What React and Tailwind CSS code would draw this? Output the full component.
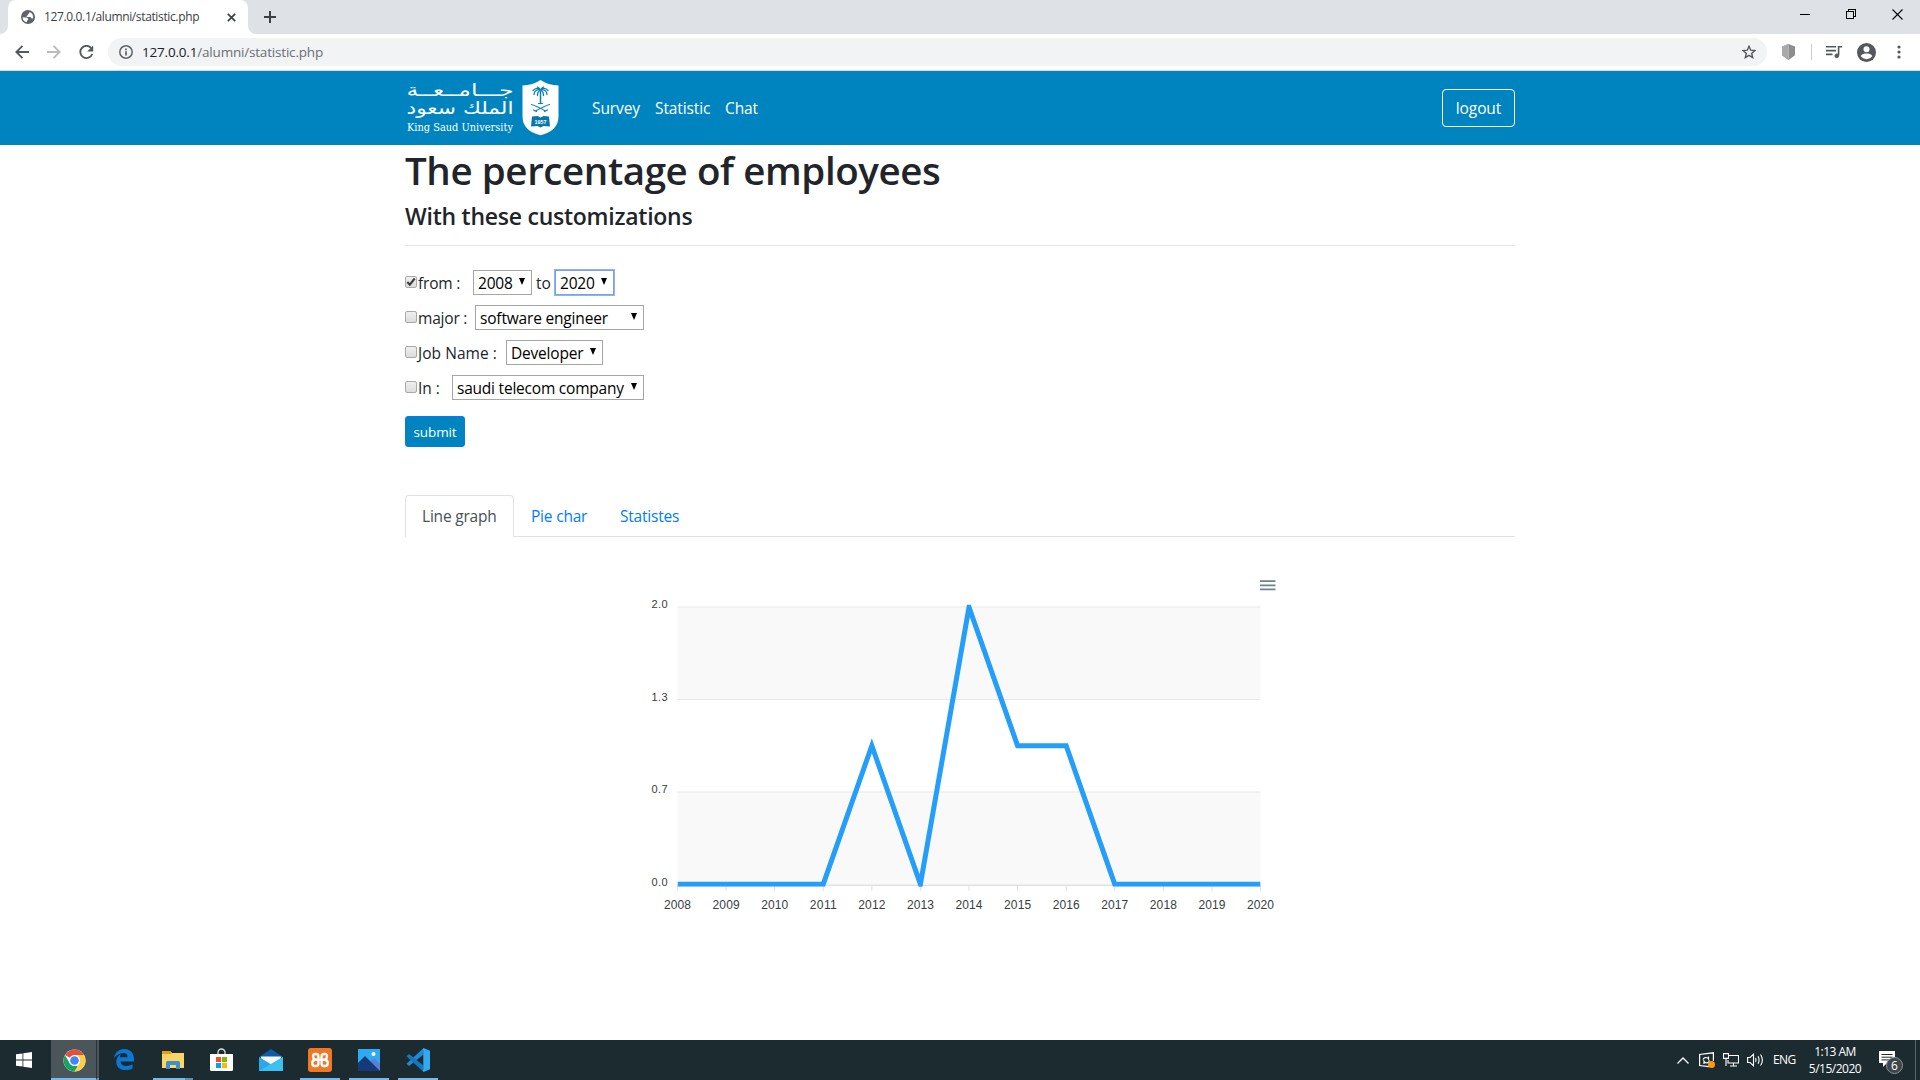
import React from "react";

const YEARS = [2008, 2009, 2010, 2011, 2012, 2013, 2014, 2015, 2016, 2017, 2018, 2019, 2020];
const VALUES = [0, 0, 0, 0, 1, 0, 2, 1, 1, 0, 0, 0, 0];
const Y_LABELS = ["2.0", "1.3", "0.7", "0.0"];

function TabStrip() {
  return (
    <div className="flex h-[34px] items-stretch bg-[#dee1e6]">
      <div className="flex w-2 items-end bg-white">
        <div className="h-full w-2 rounded-br-lg bg-[#dee1e6]" />
      </div>
      <div className="flex w-[240px] items-center rounded-t-lg bg-white pl-[13px] pr-[10px]">
        <svg width="14" height="14" viewBox="0 0 14 14" className="shrink-0">
          <circle cx="7" cy="7" r="7" fill="#5f6368" />
          <path d="M1.6 7.2L5 7.6c1.6.3 2.4 1.2 2.2 2.3L6 10.4v1.8C3.400 12 1.700 9.900 1.600 7.200zM8.500 1.900c0 1.200-.6 1.900-1.700 2v1.300L5.600 6v.9h3.200c.9 0 1.600.6 1.700 1.500h1.500c.7-2.800-.7-5.600-3.500-6.500z" fill="#fff" />
        </svg>
        <span className="ml-[9px] text-[12px] tracking-[-0.36px] text-[#3c4043]">127.0.0.1/alumni/statistic.php</span>
        <svg width="9" height="9" viewBox="0 0 9 9" className="ml-auto mr-[2px]">
          <path d="M.8.8l7.400 7.400M8.200.8L.8 8.200" stroke="#3c4043" strokeWidth="1.700" />
        </svg>
      </div>
      <div className="flex w-2 items-end bg-white">
        <div className="h-full w-2 rounded-bl-lg bg-[#dee1e6]" />
      </div>
      <svg width="12" height="12" viewBox="0 0 12 12" className="ml-2 mt-[11px]">
        <path d="M6 0v12M0 6h12" stroke="#3c4043" strokeWidth="2" />
      </svg>
      <div className="ml-auto mr-[17px] flex gap-9">
        <svg width="10" height="11" className="mt-[9px]" shapeRendering="crispEdges">
          <path d="M0 5.500h10" stroke="#000" />
        </svg>
        <svg width="10" height="11" className="mt-[9px]" shapeRendering="crispEdges" fill="none" stroke="#000">
          <path d="M.5 2.500h7v7h-7zM2.500 2.500v-2h7v7h-2" />
        </svg>
        <svg width="11" height="11" className="mt-[9px]" stroke="#000" strokeWidth="1.100">
          <path d="M.5.5l10 10M10.500.5l-10 10" />
        </svg>
      </div>
    </div>
  );
}

function Toolbar() {
  return (
    <div className="flex h-[37px] items-center border-b border-[#d5d9dc] bg-white pl-[15px] pr-[19px]">
      <svg width="14" height="14" viewBox="0 0 14 14" fill="none" stroke="#54585d" strokeWidth="1.900">
        <path d="M14 7H1.500M7.500.8L1.300 7l6.200 6.200" />
      </svg>
      <svg width="14" height="14" viewBox="0 0 14 14" fill="none" stroke="#babcbe" strokeWidth="1.900" className="ml-[18px]">
        <path d="M0 7h12.500M6.500.8L12.700 7l-6.200 6.200" />
      </svg>
      <svg width="15" height="15" viewBox="0 0 15 15" fill="none" className="ml-[18px]">
        <path d="M12.100 3A6.100 6.100 0 1 0 13.200 9" stroke="#54585d" strokeWidth="1.900" />
        <path d="M14.200.4v6H8.200z" fill="#54585d" />
      </svg>
      <div className="ml-[14px] flex h-7 w-[1659px] items-center rounded-full bg-[#f1f3f4] pl-[11px] pr-[11px]">
        <svg width="14" height="14" viewBox="0 0 14 14" fill="none">
          <circle cx="7" cy="7" r="6.200" stroke="#5f6368" strokeWidth="1.500" />
          <path d="M7 6.200v4.300M7 3.500v1.700" stroke="#5f6368" strokeWidth="1.700" />
        </svg>
        <span className="ml-[9px] text-[13.500px] tracking-[-0.19px] text-[#6b6f74]">
          <span className="text-[#202124]">127.0.0.1</span>/alumni/statistic.php
        </span>
        <svg width="14" height="14" viewBox="0 0 14 14" fill="none" stroke="#54585d" strokeWidth="1.400" className="ml-auto">
          <path d="M7 1.300l1.700 3.900 4.200.4-3.200 2.800 1 4.200L7 10.400l-3.700 2.200 1-4.200L1.100 5.600l4.200-.4z" />
        </svg>
      </div>
      <svg width="13" height="16" viewBox="0 0 13 16" className="ml-[15px]">
        <path d="M6.500 0L13 2.500v8.800L6.500 16 0 11.300V2.500z" fill="#8e8e8e" />
        <path d="M6.500 0v16L0 11.300V2.500z" fill="#a9a9a9" />
        <path d="M6.500 1.500v13" stroke="#c2c2c2" strokeWidth=".7" />
      </svg>
      <div className="ml-4 h-4 w-px bg-[#c9ccd0]" />
      <svg width="16" height="14" viewBox="0 0 16 14" className="ml-[14px]" fill="none" stroke="#54585d" strokeWidth="1.600">
        <path d="M0 1.800h10M0 5.600h10M0 9.400h6.500M16 1.800h-3.400v8.500" />
        <circle cx="10.800" cy="10.800" r="1.900" fill="#54585d" strokeWidth=".8" />
      </svg>
      <svg width="19" height="19" viewBox="0 0 19 19" className="ml-[15px]">
        <circle cx="9.500" cy="9.500" r="9.500" fill="#54585d" />
        <circle cx="9.500" cy="6.300" r="3" fill="#fff" />
        <path d="M3.700 13.100c1.100-1.900 3.700-2.500 5.800-2.500s4.700.6 5.800 2.500a7 7 0 0 1-11.600 0z" fill="#fff" />
      </svg>
      <svg width="4" height="14" viewBox="0 0 4 14" className="ml-auto" fill="#54585d">
        <circle cx="2" cy="2" r="1.600" />
        <circle cx="2" cy="7" r="1.600" />
        <circle cx="2" cy="12" r="1.600" />
      </svg>
    </div>
  );
}

function UniversityLogo() {
  return (
    <svg width="153" height="56" viewBox="0 0 153 56" fill="#fff" className="overflow-visible">
      <g className="font-['DejaVu_Sans']" direction="rtl">
        <text x="108.500" y="16" fontSize="17" textLength="107" lengthAdjust="spacingAndGlyphs">جـــامــعــة</text>
        <text x="108.500" y="33.500" fontSize="17.500" textLength="107" lengthAdjust="spacingAndGlyphs">الملك سعود</text>
      </g>
      <text x="2" y="50.500" fontSize="10.500" textLength="106" lengthAdjust="spacingAndGlyphs" className="font-['DejaVu_Serif']">King Saud University</text>
      <path d="M135.500 0c5 3.600 11 5 18 5.500v31c0 10-6.500 16-18 18.800-11.500-2.800-18-8.800-18-18.800v-31c7-.5 13-1.900 18-5.500z" />
      <g fill="none" stroke="#0a7fb5" strokeLinecap="round" transform="translate(.5)">
        <path d="M135 11v12.500" strokeWidth="1.500" />
        <path d="M135 10c-2-2.500-5-2-7.500.500M135 10c2-2.500 5-2 7.500.5M135 10c-3-1-6.500 1-6.500 4.500M135 10c3-1 6.500 1 6.500 4.500M135 10c-2 1-3 2.500-3 5.500M135 10c2 1 3 2.500 3 5.500M135 10c-1-2-1.500-2.500-3-3M135 10c1-2 1.500-2.500 3-3" strokeWidth="1.300" />
        <path d="M126 24.500c3.500 1 8.500 3.500 14 6.500M144 24.500c-3.500 1-8.500 3.500-14 6.500M128 30l3 1.500M142 30l-3 1.500" strokeWidth="1.200" />
        <path d="M133 23.500h4" strokeWidth="1" />
      </g>
      <path d="M127 36.500l5.500-.5 3 1.500 3-1.500 5.500.5 1 10-6.500-.5-3 1.500-3-1.500-6.500.5z" fill="#0878ab" />
      <text x="129.500" y="44" fontSize="5.800" fontWeight="700" textLength="12" lengthAdjust="spacingAndGlyphs" className="font-['Liberation_Sans']">1957</text>
    </svg>
  );
}

function Navbar() {
  return (
    <nav className="flex h-[74px] justify-center bg-[#0084bf] text-white">
      <div className="flex w-[1110px] items-center">
        <UniversityLogo />
        <div className="ml-[34px] flex gap-4 text-[15.500px] leading-6">
          <a className="w-[47px] whitespace-nowrap tracking-[-0.1px]">Survey</a>
          <a className="w-[54px] whitespace-nowrap tracking-[-0.1px]">Statistic</a>
          <a className="whitespace-nowrap tracking-[-0.1px]">Chat</a>
        </div>
        <button className="ml-auto flex h-[38px] w-[73px] items-center justify-center rounded border border-white pt-[2px] text-[15.500px] tracking-[-0.1px]">logout</button>
      </div>
    </nav>
  );
}

function Check({ checked }) {
  return (
    <span className="mt-[5.500px] mr-[1px] flex h-[12px] w-[12px] shrink-0 items-center justify-center rounded-[2px] border border-[#a9a9a9] bg-linear-to-b from-[#efefef] to-[#dcdcdc]">
      {checked && (
        <svg width="10" height="10" viewBox="0 0 10 10" fill="none" className="shrink-0">
          <path d="M1.300 5l2.500 2.700L8.700 1.500" stroke="#3c3c3c" strokeWidth="2.100" />
        </svg>
      )}
    </span>
  );
}

function Select({ className, focused, children }) {
  return (
    <span
      className={
        "flex h-[25px] shrink-0 items-center justify-between border bg-white pl-1 pr-[6px] text-[15.500px] whitespace-nowrap text-black " +
        (focused ? "border-[#7ba2e0] ring-1 ring-[#8fb3ee] " : "border-[#a6a6a6] ") +
        className
      }
    >
      <span className="pt-[3px]">{children}</span>
      <svg width="6" height="7" viewBox="0 0 6 7" className="mb-[2px] shrink-0">
        <path d="M0 0h6L3 7z" fill="#000" />
      </svg>
    </span>
  );
}

function Row({ label, labelClass, checked, children }) {
  return (
    <div className="flex h-[35px] items-start">
      <Check checked={checked} />
      <span className={"shrink-0 pt-[1px] text-[15.500px] leading-[25px] whitespace-nowrap " + labelClass}>{label}</span>
      {children}
    </div>
  );
}

function Filters() {
  return (
    <form className="mt-6 text-[#212529]">
      <Row label="from :" labelClass="w-[55px] tracking-[-0.2px]" checked>
        <Select className="w-[59px] tracking-[-0.2px]">2008</Select>
        <span className="w-[23px] pt-[1px] pl-1 text-[15.500px] leading-[25px]">to</span>
        <Select className="w-[59px] tracking-[-0.2px]" focused>2020</Select>
      </Row>
      <Row label="major :" labelClass="w-[57px] tracking-[-0.2px]">
        <Select className="w-[169px] tracking-[-0.18px]">software engineer</Select>
      </Row>
      <Row label="Job Name :" labelClass="w-[88px] tracking-[0.05px]">
        <Select className="w-[97px] tracking-[-0.2px]">Developer</Select>
      </Row>
      <Row label="In :" labelClass="w-[34px]">
        <Select className="w-[192px] tracking-[-0.22px]">saudi telecom company</Select>
      </Row>
      <button type="button" className="mt-[6px] flex h-[31px] w-[60px] items-center justify-center rounded-[3px] border border-[#007bff] bg-[#0084bf] pt-[1px] text-[13.500px] tracking-[-0.1px] text-white">submit</button>
    </form>
  );
}

function Tabs() {
  return (
    <div className="mt-12 flex h-[42px] border-b border-[#dee2e6] text-[15.500px] tracking-[-0.2px] text-[#007bff]">
      <div className="h-[42px] w-[109px] rounded-t border border-b-0 border-[#dee2e6] bg-white pt-[8px] pl-4 leading-6 text-[#495057]">Line graph</div>
      <div className="w-[89px] pt-[9px] pl-[17px] leading-6 whitespace-nowrap">Pie char</div>
      <div className="pt-[9px] pl-[17px] leading-6">Statistes</div>
    </div>
  );
}

function LineChart() {
  const left = 37.5;
  const top = 37.2;
  const width = 583;
  const height = 277;
  const px = (i) => left + (i * width) / 12;
  const py = (v) => top + height - (v * height) / 2;
  return (
    <svg width="640" height="350" viewBox="0 0 640 350" className="mt-[33px] ml-[235px] overflow-visible font-['Liberation_Sans']">
      <clipPath id="plot">
        <rect x={left} y={top - 2.5} width={width} height={height + 5} />
      </clipPath>
      <rect x={left} y={top} width={width} height={height / 3} fill="#f9f9f9" />
      <rect x={left} y={top + (2 * height) / 3} width={width} height={height / 3} fill="#f9f9f9" />
      <path d="M37.500 37h583M37.500 129.500h583M37.500 222h583" stroke="#e8e8e8" strokeWidth="1.200" />
      <path d="M37.500 315.200h583" stroke="#e0e0e0" strokeWidth="1.500" />
      {YEARS.map((y, i) => (
        <path key={y} d={`M${px(i)} 315v6`} stroke="#e0e0e0" />
      ))}
      {Y_LABELS.map((t, i) => (
        <text key={t} x="27.500" y={[38, 131, 223, 316][i]} fontSize="11" textAnchor="end" textLength="16" fill="#373d3f">{t}</text>
      ))}
      {YEARS.map((y, i) => (
        <text key={y} x={px(i)} y="338.500" fontSize="12" textAnchor="middle" textLength="27" fill="#373d3f">{y}</text>
      ))}
      <path clipPath="url(#plot)" d={"M" + VALUES.map((v, i) => `${px(i)} ${py(v)}`).join("L")} fill="none" stroke="#259efa" strokeWidth="5" />
      <path d="M620 11.200h15.500M620 15.300h15.500M620 19.400h15.500" stroke="#6e8192" strokeWidth="1.700" />
    </svg>
  );
}

function TaskItem({ className, children }) {
  return <div className={"flex h-10 shrink-0 items-center justify-center " + className}>{children}</div>;
}

function Taskbar() {
  return (
    <footer className="flex h-10 items-center bg-[#1b2b30] text-white">
      <TaskItem className="w-12">
        <svg width="16" height="16" viewBox="0 0 16 16" fill="#fff">
          <path d="M0 2.300L6.500 1.400v6.200H0zM7.300 1.300L16 0v7.600H7.300zM0 8.400h6.500v6.200L0 13.700zM7.300 8.400H16V16l-8.700-1.300z" />
        </svg>
      </TaskItem>
      <TaskItem className="ml-[3px] w-[45px] border-b-2 border-[#76b9ed] bg-[#4a565a]">
        <svg width="23" height="23" viewBox="0 0 48 48" className="ml-[2px] mt-[2px]">
          <circle cx="24" cy="24" r="23" fill="#fff" />
          <path d="M24 24L4.100 12.500A23 23 0 0 1 43.900 12.500H24z" fill="#de5246" />
          <path d="M24 12.500h19.900A23 23 0 0 1 24 47l10-17.200z" fill="#ffce44" />
          <path d="M4.100 12.500L14 29.700 24 35.500h6.700L24 47A23 23 0 0 1 4.100 12.500z" fill="#1aa260" />
          <circle cx="24" cy="24" r="11.500" fill="#fff" />
          <circle cx="24" cy="24" r="9" fill="#4285f4" />
        </svg>
      </TaskItem>
      <div className="h-10 w-[3px] border-b-2 border-l border-b-[#5a8fbb] border-l-[#263337] bg-[#4a565a]" />
      <TaskItem className="ml-[5px] w-10">
        <svg width="20" height="21" viewBox="0 0 20 21" className="mb-[1px]">
          <path d="M0 9.300C.8 3.500 4.800 0 10.200 0 16.300 0 20 4.300 20 10v2.400H6.500c.2 3 2.700 4.600 6 4.600 2.300 0 4.300-.6 6-1.700v4.200c-1.900 1-4.200 1.500-7 1.500-5.700 0-9.200-3-9.200-8.300 0-3.300 1.700-6 4.700-7.500-.7.900-1.100 1.800-1.200 3h7.800c0-2.600-1.300-4.100-4-4.100C5.700 4.100 2.200 6.200 0 9.300z" fill="#0c78d4" />
        </svg>
      </TaskItem>
      <TaskItem className="ml-[9px] w-8 border-b-2 border-[#76b9ed]">
        <svg width="22" height="18" viewBox="0 0 22 18" className="ml-[8px] mt-[2px]">
          <path d="M0 0h8l2 2H22v15H0z" fill="#fbd667" />
          <path d="M0 0h8.500l1.500 2-1.500 1H0z" fill="#e3a008" />
          <path d="M4 18v-6.500q0-1.500 1.500-1.500h11q1.500 0 1.500 1.500V18h-4v-4H8v4z" fill="#3e91d0" />
        </svg>
      </TaskItem>
      <div className="h-10 w-2 border-b-2 border-[#5a8fbb]" />
      <TaskItem className="ml-2 w-[41px]">
        <svg width="23" height="23" viewBox="0 0 23 23" className="mb-[1px]">
          <path d="M8 7V4.500a3.500 3.500 0 0 1 7 0V7" fill="none" stroke="#d8dcdd" strokeWidth="1.300" />
          <path d="M0 6h23v15.500q0 1.500-1.500 1.500h-20Q0 23 0 21.500z" fill="#fff" />
          <path d="M6 9h5v5H6z" fill="#f25022" />
          <path d="M12 9h5v5h-5z" fill="#7fba00" />
          <path d="M6 15h5v5H6z" fill="#00a4ef" />
          <path d="M12 15h5v5h-5z" fill="#ffb900" />
        </svg>
      </TaskItem>
      <TaskItem className="ml-[9px] w-10">
        <svg width="24" height="22" viewBox="0 0 24 22">
          <path d="M0 8L12 0l12 8v14H0z" fill="#0f5ba8" />
          <path d="M2 7.500h20v7L12 17 2 14z" fill="#f7f7f7" />
          <path d="M0 8l12 7.300L24 8v14H0z" fill="#2aa8ea" />
          <path d="M0 22L12.500 14.800 24 8v14z" fill="#3cc0f2" />
        </svg>
      </TaskItem>
      <TaskItem className="ml-[9px] w-10 border-b-2 border-[#76b9ed]">
        <svg width="24" height="24" viewBox="0 0 24 24" className="mt-[2px]">
          <rect width="24" height="24" rx="3" fill="#f37623" />
          <g fill="none" stroke="#fff" strokeWidth="2.400">
            <path d="M10.400 10.500V8.200Q10.400 6 8.200 6H7.300Q5 6 5 8.200T7.300 11.700H16.700Q19 10.500 19 8.200T16.700 6H15.800Q13.600 6 13.600 8.200V10.500" />
            <path d="M7.300 11.700Q4.200 12 4.200 15t2.600 3h1.400q2.200 0 2.200-2.200V12.500M16.700 11.700q3.100.3 3.100 3.300t-2.600 3h-1.400q-2.200 0-2.200-2.200V12.500" />
          </g>
        </svg>
      </TaskItem>
      <TaskItem className="ml-[9px] w-10 border-b-2 border-[#76b9ed]">
        <svg width="22" height="22" viewBox="0 0 22 22" className="mt-[2px]">
          <path d="M0 0h22v22H0z" fill="#2eaaf0" />
          <path d="M10 15l6-6 6 6v7H10z" fill="#5a7fdb" />
          <path d="M0 14l7-7 15 15H0z" fill="#16397a" />
          <circle cx="15.500" cy="5" r="2" fill="#fff" />
        </svg>
      </TaskItem>
      <TaskItem className="ml-[9px] w-10 border-b-2 border-[#76b9ed]">
        <svg width="24" height="24" viewBox="0 0 24 24" className="mt-[2px]">
          <path d="M.5 15.800L17.500 0v6.500L3 18z" fill="#2089d5" />
          <path d="M.5 8.200L3 6l14.500 11.500V24z" fill="#1478be" />
          <path d="M17.500 0L24 2.800v18.400L17.500 24q-1-1-.2-3V3q-.8-2 .2-3z" fill="#32a9f2" />
        </svg>
      </TaskItem>

      <div className="ml-auto flex h-10 items-center">
        <svg width="12" height="7" viewBox="0 0 12 7" fill="none" stroke="#fff" strokeWidth="1.300">
          <path d="M.5 6.500L6 1l5.500 5.500" />
        </svg>
        <svg width="19" height="17" viewBox="0 0 19 17" className="ml-[10px]" fill="none" stroke="#fff" strokeWidth="1.200">
          <path d="M14.400 9V.8L.6 2.500v11L10 14.600" />
          <path d="M4 7.500c.5-2 4-3 5.500-.5V4.500M10.500 8.500c-.5 2.500-4 3.500-5.500.8V12" />
          <circle cx="12.500" cy="12.500" r="3.500" fill="#ff9a0a" stroke="none" />
        </svg>
        <svg width="16" height="14" viewBox="0 0 16 14" className="ml-[5px]" fill="none" stroke="#fff" strokeWidth="1.100">
          <path d="M6 2.500h9.500v7.500H5V7M7 13h7M10.500 10v3M.5.600h5v4.800h-5zM3 5.500V13" />
        </svg>
        <svg width="17" height="14" viewBox="0 0 17 14" className="ml-[8px]" fill="none" stroke="#fff" strokeWidth="1.100">
          <path d="M.6 4.500h2.500L6.500 1.200v11.600L3.100 9.500H.6zM8.500 5q1 2 0 4M11 3.300q2.200 3.700 0 7.400M13.500 1.500q3.800 5.500 0 11" />
        </svg>
        <span className="ml-[9px] w-[24px] text-[12px] tracking-[-0.6px]">ENG</span>
        <div className="ml-[4px] flex w-[68px] flex-col items-center text-[12px] leading-[17px] tracking-[-0.5px] whitespace-nowrap">
          <span>1:13 AM</span>
          <span>5/15/2020</span>
        </div>
        <svg width="25" height="24" viewBox="0 0 25 24" className="ml-[10px] mt-[6px]">
          <path d="M0 0h16v12H8l-4 4v-4H0z" fill="#fff" />
          <path d="M2.500 3.500h11M2.500 6.200h11M2.500 8.900h11" stroke="#1b2b30" />
          <circle cx="15.500" cy="14.500" r="8" fill="#3d474b" stroke="#8a9194" />
          <text x="15.500" y="18.800" fontSize="12" textAnchor="middle" fill="#fff">6</text>
        </svg>
        <div className="ml-[11px] mr-1 h-10 w-px bg-[#56636a]" />
      </div>
    </footer>
  );
}

export default function App() {
  return (
    <div className="flex h-[1080px] w-[1920px] flex-col overflow-hidden bg-white font-['Open_Sans','Noto_Sans',sans-serif]">
      <TabStrip />
      <Toolbar />
      <Navbar />
      <main className="mx-auto w-[1110px] flex-1">
        <h1 className="h-[50px] text-[38.500px] leading-[50px] font-semibold tracking-[-0.4px] whitespace-nowrap text-[#212529]">The percentage of employees</h1>
        <h4 className="mt-[7px] h-[30px] text-[23px] leading-[29px] font-semibold tracking-[-0.25px] whitespace-nowrap text-[#212529]">With these customizations</h4>
        <div className="mt-[13px] h-px bg-[#e5e5e5]" />
        <Filters />
        <Tabs />
        <LineChart />
      </main>
      <Taskbar />
    </div>
  );
}
